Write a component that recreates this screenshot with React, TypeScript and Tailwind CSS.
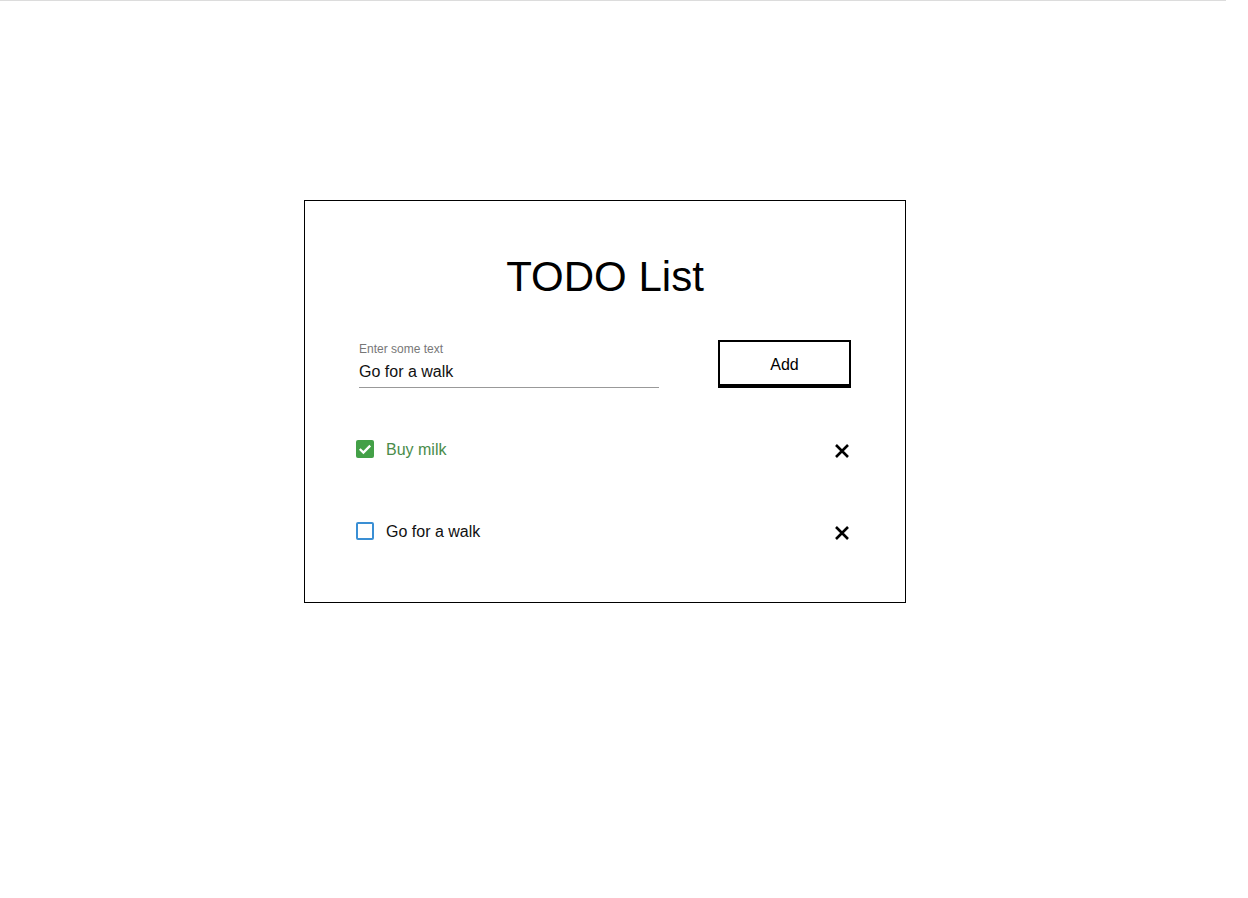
const Close = () => (
  <svg width="16" height="16" viewBox="0 0 16 16" fill="none">
    <path d="M2 2 L14 14 M14 2 L2 14" stroke="#000" strokeWidth="2.6" />
  </svg>
)

const Check = ({ done }: { done: boolean }) =>
  done ? (
    <div className="w-[18px] h-[18px] rounded-[2px] bg-[#43a047] flex items-center justify-center">
      <svg width="14" height="14" viewBox="0 0 14 14" fill="none">
        <path d="M1.8 7 L5.4 10.6 L12.2 3.6" stroke="#fff" strokeWidth="2.3" />
      </svg>
    </div>
  ) : (
    <div className="w-[18px] h-[18px] rounded-[2px] border-2 border-[#3a8fd4]" />
  )

const todos = [
  { text: "Buy milk", done: true },
  { text: "Go for a walk", done: false },
]

export default function App() {
  return (
    <div className="min-h-[898px] bg-white font-['Liberation_Sans',Arial,sans-serif]">
      <div className="w-[1226px] h-px bg-[#dcdcdc]" />
      <div className="pt-[199px] pl-[304px]">
        <div className="w-[602px] h-[403px] border border-black pt-[52px] px-[54px]">
          <h1 className="text-center text-[42px] leading-[48px] text-black">TODO List</h1>

          <div className="mt-[40px] flex items-start justify-between">
            <div className="w-[300px] border-b border-[#999] pt-[1px] pb-[5px]">
              <div className="text-[12px] leading-[14px] text-[#777]">Enter some text</div>
              <div className="mt-[6px] text-[16px] leading-[20px] text-[#111]">Go for a walk</div>
            </div>
            <button className="w-[133px] h-[48px] border-2 border-b-4 border-black bg-white pt-[3px] text-[16px] text-black -mt-[1px]">
              Add
            </button>
          </div>

          <div className="mt-[52px] flex flex-col gap-[64px]">
            {todos.map((t) => (
              <div key={t.text} className="flex items-center h-[18px] -ml-[3px]">
                <Check done={t.done} />
                <span
                  className={
                    t.done
                      ? "ml-[12px] mt-[2px] text-[16px] text-[#4a8c4a]"
                      : "ml-[12px] mt-[2px] text-[16px] text-[#111]"
                  }
                >
                  {t.text}
                </span>
                <div className="ml-auto mr-[1px] mt-[4px]">
                  <Close />
                </div>
              </div>
            ))}
          </div>
        </div>
      </div>
    </div>
  )
}
